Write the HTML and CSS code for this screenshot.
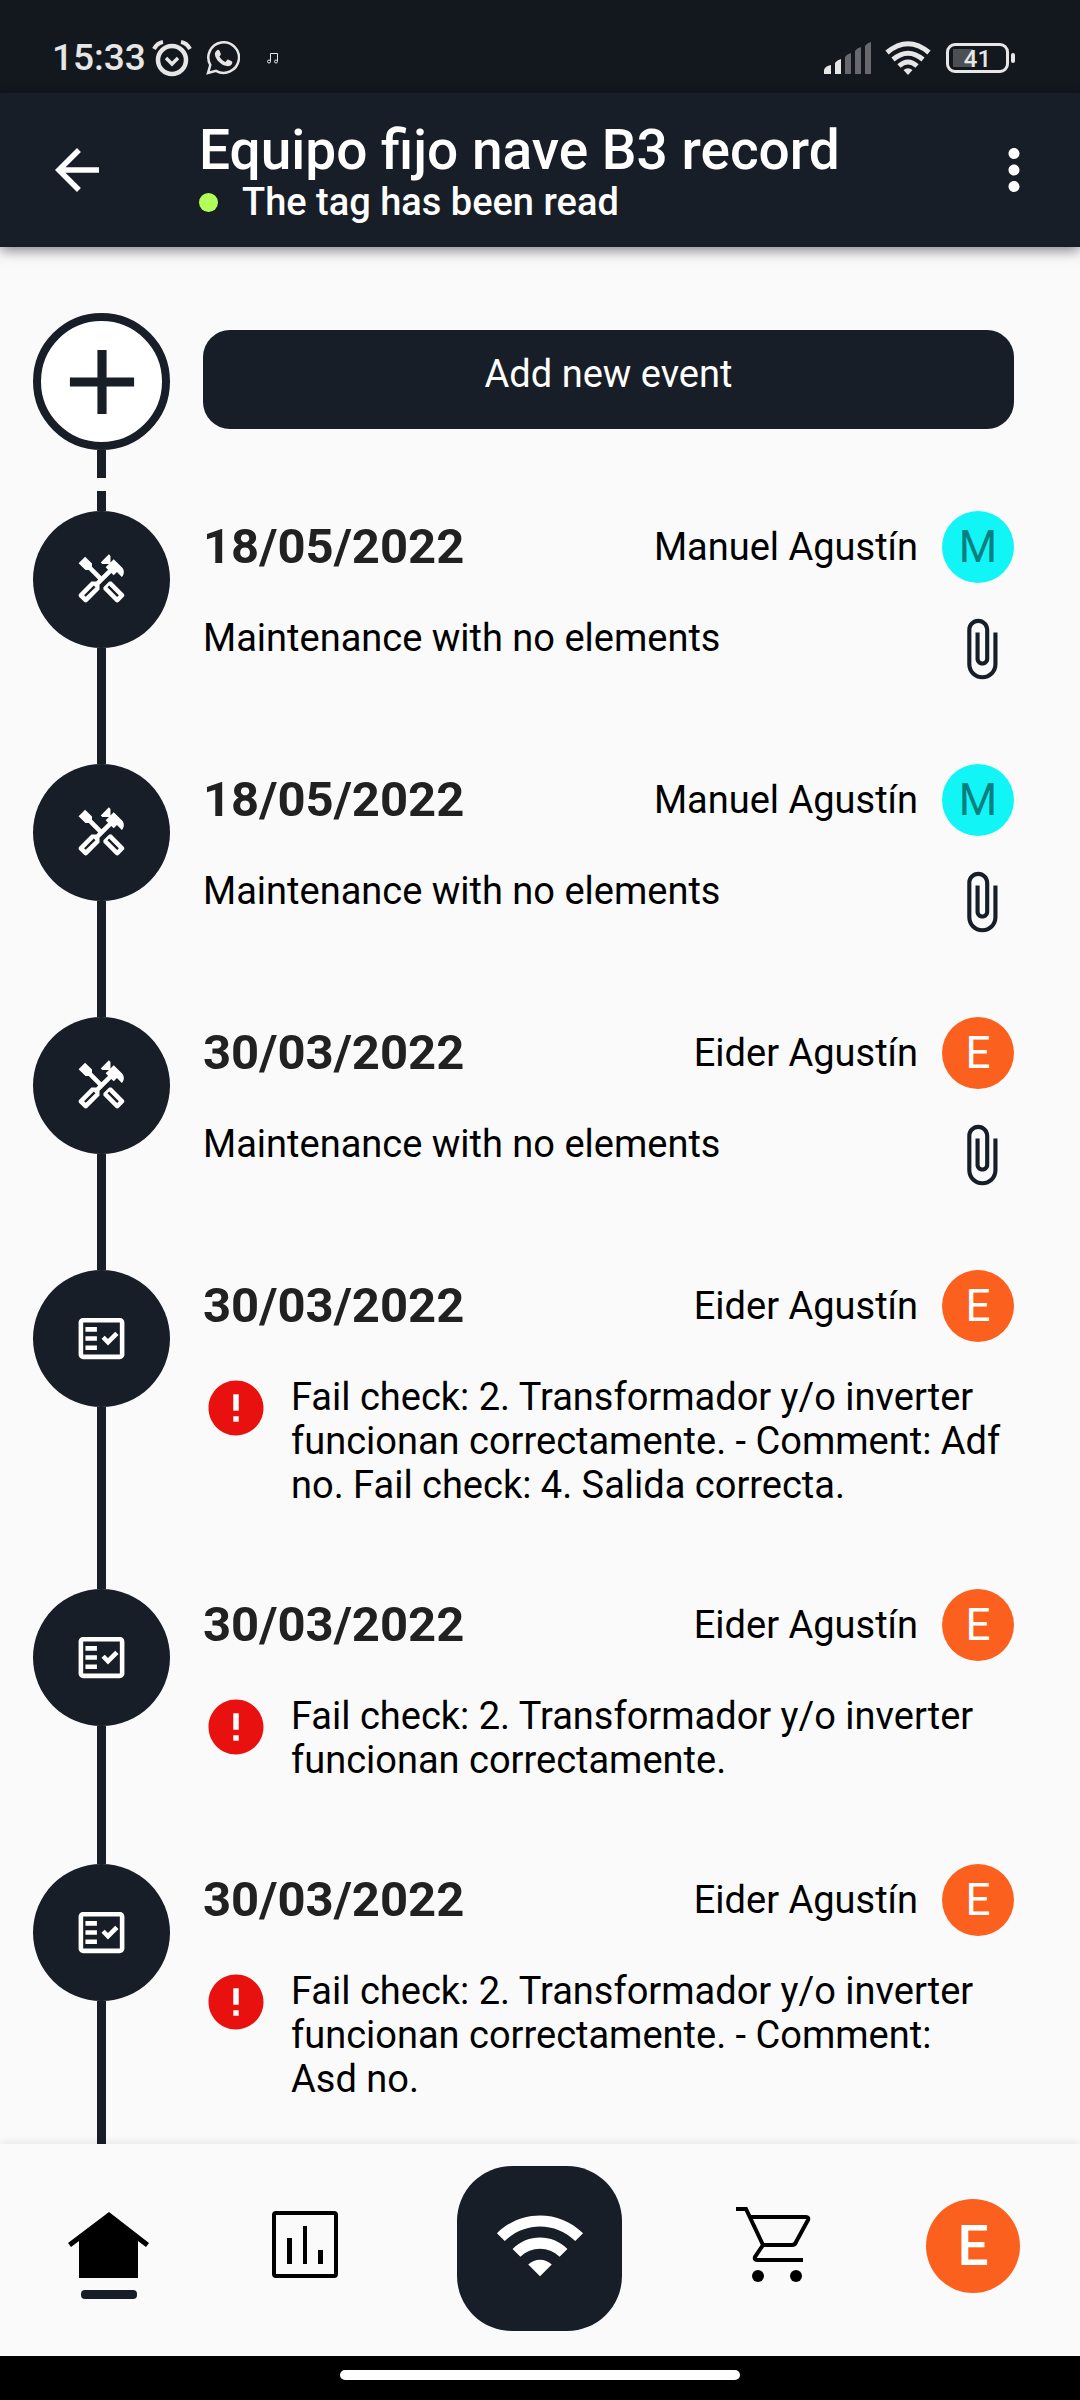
FILE: index.html
```
<!DOCTYPE html>
<html lang="en">
<head>
  <meta charset="utf-8"/>
  <meta name="viewport" content="width=device-width, initial-scale=1">
  <title>Equipo fijo nave B3 record</title>
  <link rel="stylesheet" href="styles.css">
</head>
<body>

<svg class="symbols" aria-hidden="true">
  <symbol id="tools" viewBox="0 0 24 24">
    <path d="M21.67 18.17l-5.3-5.3h-.99l-2.54 2.54v.99l5.3 5.3c.39.39 1.02.39 1.41 0l2.12-2.12c.39-.38.39-1.02 0-1.41zm-2.83 1.42l-4.24-4.24.71-.71 4.24 4.24-.71.71z"/>
    <path d="M17.34 10.19l1.41-1.41 2.12 2.12c1.17-1.17 1.17-3.07 0-4.24l-3.54-3.54-1.41 1.41V1.71L15.22 1l-3.54 3.54.71.71h2.83l-1.41 1.41 1.06 1.06-2.89 2.89-4.13-4.13V5.06L4.83 2.04 2 4.87 5.03 7.9h1.41l4.13 4.13-.85.85H7.6l-5.3 5.3c-.39.39-.39 1.02 0 1.41l2.12 2.12c.39.39 1.02.39 1.41 0l5.3-5.3v-2.12l5.15-5.15 1.06 1.05zm-7.98 5.15l-4.24 4.24-.71-.71 4.24-4.24.71.71z"/>
  </symbol>
  <symbol id="checklist" viewBox="0 0 24 24">
    <path fill-rule="evenodd" d="M20 3H4c-1.1 0-2 .9-2 2v14c0 1.1.9 2 2 2h16c1.1 0 2-.9 2-2V5c0-1.1-.9-2-2-2zm0 16H4V5h16v14z"/>
    <path d="M19.41 10.42L17.99 9l-3.17 3.17-1.41-1.42L12 12.16 14.82 15zM5 7h5v2H5zM5 11h5v2H5zM5 15h5v2H5z"/>
  </symbol>
  <symbol id="clip" viewBox="0 0 24 24">
    <path d="M16.5 6v11.5c0 2.21-1.79 4-4 4s-4-1.79-4-4V5c0-1.38 1.12-2.5 2.5-2.5s2.5 1.12 2.5 2.5v10.5c0 .55-.45 1-1 1s-1-.45-1-1V6H10v9.5c0 1.38 1.12 2.5 2.5 2.5s2.5-1.12 2.5-2.5V5c0-2.21-1.79-4-4-4S7 2.79 7 5v12.5c0 3.04 2.46 5.5 5.5 5.5s5.5-2.46 5.5-5.5V6h-1.5z"/>
  </symbol>
  <symbol id="error" viewBox="0 0 24 24">
    <path d="M12 2C6.48 2 2 6.48 2 12s4.48 10 10 10 10-4.48 10-10S17.52 2 12 2zm1 15h-2v-2h2v2zm0-4h-2V7h2v6z"/>
  </symbol>
</svg>

<div class="statusBar">
  <span class="time">15:33</span>
  <svg class="alarm" width="40" height="38" viewBox="0 0 40 38" fill="none" stroke="currentColor">
    <circle cx="20" cy="21" r="14" stroke-width="4.5"/>
    <path d="M2 10Q5 4 11 3M38 10Q35 4 29 3" stroke-width="4"/>
    <path d="M14 19l6 6 6-6" stroke-width="3.5"/>
  </svg>
  <svg class="whatsapp" width="34" height="34" viewBox="0 0 34 34">
    <path d="M2 32l2.300-8A15.300 15.300 0 1 1 10 29.800z" fill="none" stroke="currentColor" stroke-width="2.500"/>
    <path d="M11.500 9c.8-.3 1.500-.2 2 .8l1.300 3c.2.600 0 1.100-1.400 2.800 1.500 2.700 3.400 4.300 6 5.400l1.800-2c.4-.5.8-.6 1.400-.3l3 1.500c.7.400.8.800.6 1.700-.6 2.400-3 3.600-5.400 3.200C15 24 9.500 18.500 8.900 13.400c-.2-1.900 1.200-3.900 2.600-4.400z" fill="currentColor"/>
  </svg>
  <svg class="note" width="12" height="12" viewBox="0 0 12 12" fill="none" stroke="currentColor">
    <path d="M3.500 9V1.500h7V9"/>
    <circle cx="2" cy="9.500" r="1.500"/>
    <circle cx="9" cy="9.500" r="1.500"/>
  </svg>
  <svg class="signal" width="48" height="32" viewBox="0 0 48 32" fill="currentColor">
    <path d="M0 32v-4q1-4 7-5v9zM11 32V21q2-3 6-4v15z"/>
    <path d="M21 32V15q2-3 6-4v21zM31 32V9q2-3 6-4v27zM41 32V4q2-3 6-4v32z" opacity=".4"/>
  </svg>
  <svg class="statusWifi" width="46" height="34" viewBox="0 0 46 34" fill="none" stroke="currentColor" stroke-width="5">
    <path d="M2 11.500Q23-6 44 11.500"/>
    <path d="M8 18.500Q23 6 38 18.500"/>
    <path d="M14 25Q23 17 32 25"/>
    <path d="M18.500 29Q23 25.500 27.500 29L23 34z" fill="currentColor" stroke="none"/>
  </svg>
  <div class="battery"><span>41</span></div>
</div>

<header class="appBar">
  <button class="iconButton" type="button" aria-label="Back">
    <svg width="66" height="66" viewBox="0 0 24 24"><path d="M20 11H7.830l5.590-5.590L12 4l-8 8 8 8 1.410-1.410L7.830 13H20v-2z"/></svg>
  </button>
  <div class="titles">
    <h1>Equipo fijo nave B3 record</h1>
    <p class="tagStatus">The tag has been read</p>
  </div>
  <button class="iconButton" type="button" aria-label="More options">
    <svg width="66" height="66" viewBox="0 0 24 24"><path d="M12 8c1.100 0 2-.9 2-2s-.9-2-2-2-2 .9-2 2 .9 2 2 2zm0 2c-1.100 0-2 .9-2 2s.9 2 2 2 2-.9 2-2-.9-2-2-2zm0 6c-1.100 0-2 .9-2 2s.9 2 2 2 2-.9 2-2-.9-2-2-2z"/></svg>
  </button>
</header>

<main>
  <div class="row">
    <div class="rail">
      <div class="node add">
        <svg width="110" height="110" viewBox="0 0 24 24"><path d="M19 13h-6v6h-2v-6H5v-2h6V5h2v6h6v2z"/></svg>
      </div>
      <div class="line"></div>
    </div>
    <div class="addArea">
      <button class="addButton" type="button">Add new event</button>
    </div>
  </div>

  <ul class="events">
    <li class="row">
      <div class="rail"><div class="node"><svg><use href="#tools"/></svg></div><div class="line"></div></div>
      <div class="event">
        <div class="eventHead"><h2>18/05/2022</h2><span>Manuel Agustín</span><span class="avatar cyan">M</span></div>
        <div class="eventBody"><p>Maintenance with no elements</p><svg><use href="#clip"/></svg></div>
      </div>
    </li>
    <li class="row">
      <div class="rail"><div class="node"><svg><use href="#tools"/></svg></div><div class="line"></div></div>
      <div class="event">
        <div class="eventHead"><h2>18/05/2022</h2><span>Manuel Agustín</span><span class="avatar cyan">M</span></div>
        <div class="eventBody"><p>Maintenance with no elements</p><svg><use href="#clip"/></svg></div>
      </div>
    </li>
    <li class="row">
      <div class="rail"><div class="node"><svg><use href="#tools"/></svg></div><div class="line"></div></div>
      <div class="event">
        <div class="eventHead"><h2>30/03/2022</h2><span>Eider Agustín</span><span class="avatar">E</span></div>
        <div class="eventBody"><p>Maintenance with no elements</p><svg><use href="#clip"/></svg></div>
      </div>
    </li>
    <li class="row">
      <div class="rail"><div class="node"><svg><use href="#checklist"/></svg></div><div class="line"></div></div>
      <div class="event">
        <div class="eventHead"><h2>30/03/2022</h2><span>Eider Agustín</span><span class="avatar">E</span></div>
        <div class="eventBody"><svg class="error"><use href="#error"/></svg><p>Fail check: 2. Transformador y/o inverter funcionan correctamente. - Comment: Adf no. Fail check: 4. Salida correcta.</p></div>
      </div>
    </li>
    <li class="row">
      <div class="rail"><div class="node"><svg><use href="#checklist"/></svg></div><div class="line"></div></div>
      <div class="event">
        <div class="eventHead"><h2>30/03/2022</h2><span>Eider Agustín</span><span class="avatar">E</span></div>
        <div class="eventBody"><svg class="error"><use href="#error"/></svg><p>Fail check: 2. Transformador y/o inverter funcionan correctamente.</p></div>
      </div>
    </li>
    <li class="row">
      <div class="rail"><div class="node"><svg><use href="#checklist"/></svg></div><div class="line"></div></div>
      <div class="event">
        <div class="eventHead"><h2>30/03/2022</h2><span>Eider Agustín</span><span class="avatar">E</span></div>
        <div class="eventBody"><svg class="error"><use href="#error"/></svg><p>Fail check: 2. Transformador y/o inverter funcionan correctamente. - Comment: Asd&nbsp;no.</p></div>
      </div>
    </li>
  </ul>
</main>

<nav>
  <a class="tab active" href="#home" aria-label="Home">
    <svg width="88" height="88" viewBox="0 0 88 88"><path d="M44 13l40 31-3 4-8-6v37H14V42l-8 6-3-4z"/></svg>
  </a>
  <a class="tab" href="#stats" aria-label="Statistics">
    <svg width="88" height="88" viewBox="0 0 88 88">
      <rect x="13" y="14" width="62" height="63" rx="2" fill="none" stroke="#000" stroke-width="4"/>
      <path d="M26 39h5v26h-5zM42 27h4v38h-4zM57 51h5v14h-5z"/>
    </svg>
  </a>
  <button class="scan" type="button" aria-label="Scan tag">
    <svg width="94" height="94" viewBox="0 0 24 24"><path d="M1 9l2 2c4.970-4.970 13.030-4.970 18 0l2-2C16.930 2.930 7.080 2.930 1 9zm8 8l3 3 3-3c-1.650-1.660-4.340-1.660-6 0zm-4-4l2 2c2.760-2.760 7.240-2.760 10 0l2-2C15.140 9.140 8.870 9.140 5 13z"/></svg>
  </button>
  <a class="tab" href="#cart" aria-label="Cart">
    <svg width="88" height="88" viewBox="0 0 88 88">
      <path d="M6 10h10l17 36-8 12q-1 3 2 3h46M20 18h56q3 0 2 3L66 43q-1 3-4 3H33" fill="none" stroke="#000" stroke-width="4"/>
      <circle cx="28" cy="77" r="6"/>
      <circle cx="66" cy="77" r="6"/>
    </svg>
  </a>
  <a class="tab" href="#profile" aria-label="Profile"><span class="avatar profile">E</span></a>
</nav>

<div class="gestureBar"><div></div></div>

</body>
</html>
```
FILE: styles.css
```
* {
  box-sizing: border-box;
}
body {
  margin: 0;
  height: 100vh;
  display: flex;
  flex-direction: column;
  background-color: #fafafa;
  color: #000;
  font-family: Roboto, "Liberation Sans", sans-serif;
  font-size: 38px;
  line-height: 44px;
}
h1, h2, p {
  margin: 0;
}
svg {
  display: block;
  flex: none;
}
button {
  border: 0;
  font: inherit;
  color: #fff;
  background-color: #181e27;
}
.symbols {
  display: none;
}

.statusBar {
  flex: none;
  height: 93px;
  padding: 22px 71px 0 52px;
  display: flex;
  align-items: center;
  background-color: #13171e;
  color: #e6e6e6;
}
.time {
  font-size: 37px;
  font-weight: 500;
}
.alarm {
  margin-left: 6px;
}
.whatsapp {
  margin-left: 14px;
}
.note {
  margin-left: 27px;
}
.signal {
  margin-left: auto;
}
.statusWifi {
  margin-left: 13px;
}
.battery {
  position: relative;
  width: 63px;
  height: 30px;
  margin-left: 15px;
  border: 3px solid #e6e6e6;
  border-radius: 9px;
  background: linear-gradient(#4c4f54, #4c4f54) 4px 3px / 20px 18px no-repeat;
  font-size: 24px;
  font-weight: 500;
  line-height: 26px;
  text-align: center;
}
.battery::after {
  content: "";
  position: absolute;
  top: 7px;
  right: -9px;
  width: 4px;
  height: 10px;
  border-radius: 2px;
  background-color: #e6e6e6;
}

.appBar {
  flex: none;
  height: 154px;
  padding: 0 33px 0 44px;
  display: flex;
  align-items: center;
  background-color: #181e27;
  color: #fff;
  box-shadow: 0 4px 12px rgba(0, 0, 0, .45);
  z-index: 1;
}
.iconButton {
  padding: 0;
  fill: #fff;
}
.titles {
  flex: 1;
  padding: 4px 0 0 89px;
}
h1 {
  font-size: 55px;
  font-weight: 500;
  line-height: 60px;
}
.tagStatus {
  display: flex;
  align-items: center;
  gap: 24px;
  font-weight: 500;
}
.tagStatus::before {
  content: "";
  width: 19px;
  height: 19px;
  border-radius: 50%;
  background-color: #b2ff59;
}

main {
  flex: 1;
  min-height: 0;
  overflow: auto;
  scrollbar-width: none;
  padding: 66px 66px 0 33px;
}
.row {
  display: flex;
  gap: 33px;
}
.rail {
  flex: none;
  width: 137px;
  display: flex;
  flex-direction: column;
  align-items: center;
}
.node {
  flex: none;
  width: 137px;
  height: 137px;
  display: flex;
  align-items: center;
  justify-content: center;
  border-radius: 50%;
  background-color: #181e27;
  fill: #fff;
}
.node svg {
  width: 55px;
  height: 55px;
}
.node.add {
  border: 8px solid #181e27;
  background-color: #fff;
  fill: #181e27;
}
.node.add svg {
  width: 110px;
  height: 110px;
}
.line {
  flex: 1;
  width: 9px;
  min-height: 28px;
  background-color: #181e27;
}
.addArea {
  flex: 1;
  padding-top: 17px;
}
.addButton {
  width: 100%;
  padding: 22px 0 33px;
  border-radius: 27px;
}

.events {
  margin: 13px 0 0;
  padding: 0;
  list-style: none;
}
.events::before {
  content: "";
  display: block;
  width: 9px;
  height: 20px;
  margin-left: 64px;
  background-color: #181e27;
}
.event {
  flex: 1;
  padding-bottom: 82px;
}
.eventHead {
  display: flex;
  align-items: center;
  margin-bottom: 33px;
}
h2 {
  flex: 1;
  color: #212121;
  font-size: 49px;
  font-weight: 700;
}
.avatar {
  width: 72px;
  height: 72px;
  margin-left: 24px;
  border-radius: 50%;
  background-color: #fc601f;
  color: #fff;
  font-size: 44px;
  line-height: 72px;
  text-align: center;
}
.avatar.cyan {
  background-color: #12f5f7;
  color: #0a7f80;
}
.eventBody {
  display: flex;
  gap: 22px;
}
.eventBody p {
  flex: 1;
}
.eventBody svg {
  width: 66px;
  height: 66px;
  fill: #181e27;
}
.eventBody .error {
  fill: #e8110f;
}

nav {
  flex: none;
  padding: 22px 60px 25px 65px;
  display: flex;
  align-items: center;
  justify-content: space-between;
  background-color: #fafafa;
  box-shadow: 0 -2px 8px rgba(0, 0, 0, .08);
  z-index: 1;
}
.tab {
  height: 100px;
  text-decoration: none;
}
.tab.active::after {
  content: "";
  display: block;
  width: 56px;
  height: 9px;
  margin: 3px auto 0;
  border-radius: 4px;
  background-color: #181e27;
}
.scan {
  width: 165px;
  height: 165px;
  padding: 0 0 8px;
  display: flex;
  align-items: center;
  justify-content: center;
  border-radius: 55px;
  fill: #fff;
}
.avatar.profile {
  display: block;
  width: 94px;
  height: 94px;
  margin: 0;
  font-size: 55px;
  font-weight: 500;
  line-height: 94px;
}
.gestureBar {
  flex: none;
  height: 44px;
  padding-top: 14px;
  background-color: #000;
}
.gestureBar div {
  width: 37%;
  height: 10px;
  margin: 0 auto;
  border-radius: 5px;
  background-color: #fff;
}
```
